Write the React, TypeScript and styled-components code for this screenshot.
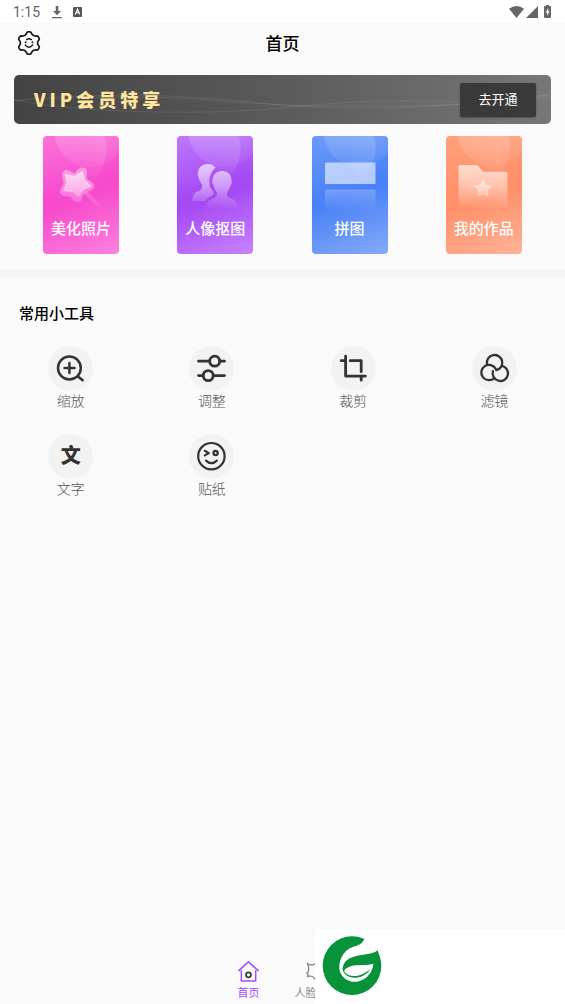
import React from 'react';
import styled, { createGlobalStyle } from 'styled-components';

const GlobalStyle = createGlobalStyle`
  *, *::before, *::after { box-sizing: border-box; }
  body {
    margin: 0;
    background: #fafafa;
    font-family: Roboto, "Noto Sans CJK SC", sans-serif;
  }
  button { font: inherit; border: 0; padding: 0; background: none; cursor: pointer; }
  svg { display: block; }
`;

const Screen = styled.div`
  min-height: 100vh;
  display: flex;
  flex-direction: column;
  background: #fafafa;
`;

const StatusBar = styled.div`
  height: 23px;
  padding: 0 12px 0 13px;
  display: flex;
  align-items: center;
  justify-content: space-between;
  background: #fff;
  color: #666;
`;

const StatusGroup = styled.div<{ $gap: number }>`
  display: flex;
  align-items: center;
  gap: ${(p) => p.$gap}px;
`;

const Clock = styled.span`
  padding-top: 1px;
  font-size: 14px;
  line-height: 22px;
`;

const Header = styled.header`
  height: 40px;
  padding: 0 17px;
  display: grid;
  grid-template-columns: 1fr auto 1fr;
  align-items: center;
`;

const SettingsButton = styled.button`
  width: 24px;
  height: 24px;
`;

const PageTitle = styled.h1`
  margin: 0;
  padding-top: 2px;
  font-size: 17px;
  line-height: 24px;
  font-weight: 500;
  color: #000;
`;

const Main = styled.main`
  flex: 1;
`;

const Banner = styled.section`
  position: relative;
  height: 49px;
  margin: 12px 14px 0;
  padding: 0 15px 0 20px;
  display: flex;
  align-items: center;
  justify-content: space-between;
  border-radius: 5px;
  overflow: hidden;
  background: linear-gradient(90deg, #444344, #5b5b5b 50%, #777);
`;

const BannerLines = styled.svg`
  position: absolute;
  inset: 0;
  width: 100%;
  height: 100%;
`;

const BannerTitle = styled.span`
  position: relative;
  padding-bottom: 2px;
  font-family: "Noto Sans CJK SC", sans-serif;
  font-size: 18px;
  line-height: 24px;
  font-weight: 900;
  letter-spacing: 4px;
  color: #ffe69c;
`;

const OpenButton = styled.button`
  && {
    position: relative;
    width: 76px;
    height: 34px;
    padding-top: 1px;
    border-radius: 2px;
    background: #3a3a3a;
    box-shadow: 0 1px 2px rgba(0, 0, 0, 0.3);
    color: #fff;
    font-size: 13px;
    line-height: 20px;
  }
`;

const Features = styled.section`
  padding: 12px 14px 15px;
  display: grid;
  grid-template-columns: repeat(4, 1fr);
  justify-items: center;
`;

const FeatureCard = styled.button<{ $from: string; $mid: string; $to: string }>`
  && {
    position: relative;
    width: 76px;
    height: 118px;
    padding-top: 71px;
    display: flex;
    justify-content: center;
    border-radius: 4px;
    overflow: hidden;
    background: linear-gradient(
      160deg,
      ${(p) => p.$from},
      ${(p) => p.$mid} 45%,
      ${(p) => p.$mid} 52%,
      ${(p) => p.$to}
    );
  }
`;

const FeatureArt = styled.svg`
  position: absolute;
  inset: 0;
  width: 100%;
  height: 100%;
`;

const FeatureLabel = styled.span`
  position: relative;
  margin-top: 11px;
  font-size: 15px;
  line-height: 22px;
  font-weight: 500;
  color: #fff;
  white-space: nowrap;
`;

const Divider = styled.div`
  height: 9px;
  background: #f5f5f5;
`;

const SectionTitle = styled.h2`
  margin: 0;
  padding: 25px 19px 21px;
  font-size: 15px;
  line-height: 22px;
  font-weight: 500;
  color: #000;
`;

const Tools = styled.div`
  display: grid;
  grid-template-columns: repeat(4, 1fr);
  row-gap: 22px;
  justify-items: center;
`;

const Tool = styled.button`
  display: flex;
  flex-direction: column;
  align-items: center;
`;

const ToolDisc = styled.span`
  width: 45px;
  height: 45px;
  display: grid;
  place-items: center;
  border-radius: 50%;
  background: #f2f2f2;
  color: #333;
`;

const ToolGlyph = styled.span`
  font-size: 20px;
  line-height: 45px;
  font-weight: 900;
`;

const ToolLabel = styled.span`
  font-size: 14px;
  line-height: 21px;
  font-weight: 300;
  color: #555;
`;

const TabBar = styled.nav`
  padding: 10px 0 0;
  display: flex;
  justify-content: center;
  gap: 24px;
`;

const Tab = styled.button<{ $active?: boolean }>`
  && {
    width: 44px;
    display: flex;
    flex-direction: column;
    align-items: center;
    gap: 2px;
    color: ${(p) => (p.$active ? '#a64dff' : '#8a8a8a')};
  }
`;

const TabLabel = styled.span<{ $start?: boolean }>`
  align-self: ${(p) => (p.$start ? 'flex-start' : 'center')};
  font-size: 11px;
  line-height: 20px;
`;

const Watermark = styled.aside`
  position: fixed;
  right: 0;
  bottom: 0;
  width: 250px;
  height: 75px;
  padding: 7px;
  background: #fff;
`;

const gearPath = (() => {
  const at = (deg: number, r: number) => {
    const a = (deg * Math.PI) / 180;
    return `${(12 + r * Math.cos(a)).toFixed(2)} ${(12 + r * Math.sin(a)).toFixed(2)}`;
  };
  let d = `M${at(-100, 11)}`;
  for (let k = 0; k < 6; k += 1) {
    const t = -90 + k * 60;
    d += `Q${at(t, 11.8)} ${at(t + 10, 11)}L${at(t + 16, 9.6)}Q${at(t + 30, 7.9)} ${at(t + 44, 9.6)}L${at(t + 50, 11)}`;
  }
  return `${d}Z`;
})();

const SettingsIcon = () => (
  <svg width="24" height="24" viewBox="0 0 24 24" fill="none" stroke="#1a1a1a" strokeWidth="1.7" strokeLinecap="round" strokeLinejoin="round">
    <path d={gearPath} />
    <path d="M9.600 8.600Q12 6.900 14.400 8.600M8.300 14Q12 18.400 15.700 14" strokeWidth="1.4" />
    <path d="M8.600 11v.5M15.400 11v.5" />
  </svg>
);

const ToolSvg = ({ children }: { children: React.ReactNode }) => (
  <svg width="45" height="45" viewBox="0 0 45 45" fill="none" stroke="currentColor" strokeWidth="2.8" strokeLinecap="round" strokeLinejoin="round">
    {children}
  </svg>
);

const tools = [
  {
    label: '缩放',
    icon: (
      <ToolSvg>
        <circle cx="21.4" cy="22" r="11.4" strokeWidth="2.5" />
        <path d="M16.5 22h10M21.4 17v10" strokeWidth="2.5" />
        <path d="M30 30.6l4.6 3.600" strokeWidth="2.6" />
      </ToolSvg>
    ),
  },
  {
    label: '调整',
    icon: (
      <ToolSvg>
        <path d="M9.5 15.2h11M31 15.2h4.5M9.5 29.6h4.5M24.5 29.6h11" />
        <circle cx="25.7" cy="15.2" r="5" />
        <circle cx="19.2" cy="29.6" r="5" />
      </ToolSvg>
    ),
  },
  {
    label: '裁剪',
    icon: (
      <ToolSvg>
        <path d="M10.2 14.7h4.3M14.6 10.2v19.9h19.8" />
        <path d="M19.2 14.7h11v11M30.2 30.2v4" />
      </ToolSvg>
    ),
  },
  {
    label: '滤镜',
    icon: (
      <ToolSvg>
        <g strokeWidth="2.3">
          <path d="M24.3 24.2A7.7 7.7 0 1 0 15 18.2" />
          <path d="M23.8 22.9A7.7 7.7 0 1 0 22.4 32" />
          <path d="M20.9 25.2A7.7 7.7 0 1 0 30.1 19.8" />
        </g>
      </ToolSvg>
    ),
  },
  { label: '文字', icon: <ToolGlyph>文</ToolGlyph> },
  {
    label: '贴纸',
    icon: (
      <ToolSvg>
        <g strokeWidth="2.2">
          <circle cx="22.4" cy="22.2" r="13.2" />
          <path d="M15.8 16.8l4 2.3-4 2.3" />
          <circle cx="26.6" cy="19" r="2.1" />
          <path d="M17 26.6Q22.4 31.8 27.8 26.6" />
        </g>
      </ToolSvg>
    ),
  },
];

const starPath =
  'M33 36Q36 31 40 31.500Q44.500 32 44 37L43.800 41Q44 43 46 44L49 46Q53 48.500 50 53Q48 55 44 56Q41 57 40 60Q38.500 66 35 66Q31 66 29.500 63Q27.500 60.500 25 60.300L21 60Q16.500 59 17 54.500Q18 51 20 49Q21 47 20 44L19 39.500Q19 34 24 34Q27 35 29.500 36.500Q31.500 37.500 33 36z';

const features = [
  {
    label: '美化照片',
    from: '#fb73d9',
    mid: '#f74acd',
    to: '#fd82dd',
    art: (
      <>
        <path d="M43.500 57.500l14 14" stroke="url(#fade)" strokeWidth="4" strokeLinecap="round" />
        <path d={starPath} fill="url(#soft)" />
        <path d="M39.500 35.500L41.500 44 48 50 40 53.500 35.500 60 29.500 55.500 20.500 54.500 24 47 22.500 38.500 31.500 40.500z" fill="url(#shine)" stroke="url(#soft)" strokeWidth="1.500" strokeLinejoin="round" />
      </>
    ),
  },
  {
    label: '人像抠图',
    from: '#bd79fb',
    mid: '#a64af4',
    to: '#c783ff',
    art: (
      <>
        <path d="M38.500 31.500C36.500 28.500 33 27.700 30 28c-6 .5-9 4.500-9 9-.8 1-.3 3.500.7 4.500.5 4 3.300 5.500 3.500 8 .3 4-2.200 5-5.700 6.500-3 1.500-4 4-4 9h13c2-3.500 6-4.500 7.500-6 1.500-1.500.5-3-.5-5-3-2-3-5-3-7.500-.5-5 1.500-10.500 6-15z" fill="url(#shine)" />
        <path d="M45 35c-6 0-9.500 4-9.500 9.500-.8 1 0 4 1 5 .7 4 3 5 3.500 8 .3 4-3 4.700-6 6-3.500 1.500-4.500 4-4.500 9h31c0-5-1-7.500-4.500-9-3-1.300-6.300-2-6-6 .5-3 2.800-4 3.500-8 1-1 1.800-4 1-5C54.500 39 51 35 45 35z" fill="url(#shine)" />
      </>
    ),
  },
  {
    label: '拼图',
    from: '#6d9af8',
    mid: '#4a82f7',
    to: '#86aaf8',
    art: (
      <>
        <rect x="13" y="26.500" width="50.500" height="21.500" rx="1" fill="#fff" opacity=".58" />
        <rect x="13" y="53.500" width="50.500" height="21" rx="1" fill="url(#fade)" />
      </>
    ),
  },
  {
    label: '我的作品',
    from: '#ffa17d',
    mid: '#ff9069',
    to: '#ffb297',
    art: (
      <>
        <path d="M12.500 31a2 2 0 0 1 2-2h15q2 0 3.500 2l4.500 4.700H59.500a2 2 0 0 1 2 2V72h-49z" fill="url(#shine)" />
        <path d="M37 44l2.600 5.400 6 .8-4.400 4.100 1.100 6-5.300-2.800-5.300 2.800 1.100-6-4.400-4.100 6-.8z" fill="url(#shine)" stroke="url(#shine)" strokeLinejoin="round" />
      </>
    ),
  },
];

const ArtDefs = () => (
  <svg width="0" height="0" style={{ position: 'absolute' }} aria-hidden="true">
    <defs>
      <linearGradient id="shine" gradientUnits="userSpaceOnUse" x1="0" y1="27" x2="0" y2="73">
        <stop offset="0" stopColor="#fff" stopOpacity=".68" />
        <stop offset=".5" stopColor="#fff" stopOpacity=".45" />
        <stop offset="1" stopColor="#fff" stopOpacity="0" />
      </linearGradient>
      <linearGradient id="soft" gradientUnits="userSpaceOnUse" x1="0" y1="30" x2="0" y2="70">
        <stop offset="0" stopColor="#fff" stopOpacity=".42" />
        <stop offset="1" stopColor="#fff" stopOpacity=".22" />
      </linearGradient>
      <linearGradient id="fade" gradientUnits="userSpaceOnUse" x1="0" y1="30" x2="0" y2="75">
        <stop offset="0" stopColor="#fff" stopOpacity=".5" />
        <stop offset="1" stopColor="#fff" stopOpacity="0" />
      </linearGradient>
      <linearGradient id="halo" gradientUnits="userSpaceOnUse" x1="0" y1="0" x2="0" y2="32">
        <stop offset="0" stopColor="#fff" stopOpacity=".12" />
        <stop offset="1" stopColor="#fff" stopOpacity=".04" />
      </linearGradient>
      <linearGradient id="arc" gradientUnits="userSpaceOnUse" x1="60" y1="8" x2="32" y2="42">
        <stop offset="0" stopColor="#fff" stopOpacity=".14" />
        <stop offset="1" stopColor="#fff" stopOpacity="0" />
      </linearGradient>
    </defs>
  </svg>
);

const HomeIcon = () => (
  <svg width="21" height="21" viewBox="0 0 21 21" fill="none" stroke="currentColor" strokeWidth="1.500" strokeLinecap="round" strokeLinejoin="round">
    <path d="M.8 9.600L10.500.9l9.700 8.700M3.300 9.800v10.300h14.400V9.800" />
    <circle cx="10.500" cy="13.800" r="2.500" stroke="#3d3d3d" strokeWidth="1.800" />
  </svg>
);

const FaceIcon = () => (
  <svg width="21" height="21" viewBox="0 0 21 21" fill="none" stroke="currentColor" strokeWidth="1.300" strokeLinejoin="round">
    <path d="M1.200 2.300Q4.500 5 8 3.400l2.500-2 2.500 2Q16.500 5 19.800 2.300 17.500 7 20.200 12.500 18 13 18.600 15.300 14 14.500 13 17l-2.500 3L8 17Q6.500 14.500 1.500 15.500 3 13 .8 12.500 4.500 8.500 1.200 2.300z" />
  </svg>
);

const LeafLogo = () => (
  <svg width="60" height="60" viewBox="0 0 180 180" role="img" aria-label="logo">
    <circle cx="90" cy="89" r="88" fill="#08923a" />
    <path d="M128 0L127 9Q121 24 104 29C70 35 50 66 52 98C56 128 84 140 104 137C130 133 150 115 154 84L167 43 180 30V0z" fill="#fff" />
    <path d="M167 43C150 56 125 55 100 61C75 67 60 83 62 103C70 129 118 138 146 99L154 84 172 64z" fill="#08923a" />
    <path d="M154 83C130 92 95 80 71 98C66 102 66 106 70 111C88 128 122 120 146 98L142 108Q152 98 154 83z" fill="#fff" />
  </svg>
);

export default function App() {
  return (
    <>
      <GlobalStyle />
      <ArtDefs />
      <Screen>
        <StatusBar>
          <StatusGroup $gap={12}>
            <Clock>1:15</Clock>
            <StatusGroup $gap={11}>
              <svg width="10" height="14" viewBox="0 0 10 14" fill="currentColor">
                <path d="M3.700 1h2.600v5h2.700L5 10.300 1 6h2.700zM0 12h10v1.300H0z" />
              </svg>
              <svg width="9" height="10" viewBox="0 0 9 10">
                <rect width="9" height="10" rx="1" fill="#555" />
                <path d="M2.200 7.500l2.300-5.500 2.300 5.500M3.200 5.700h2.600" fill="none" stroke="#fff" strokeWidth="1.200" />
              </svg>
            </StatusGroup>
          </StatusGroup>
          <StatusGroup $gap={2}>
            <svg width="15" height="12" viewBox="0 0 15 12" fill="currentColor">
              <path d="M0 2.800Q7.500-2.600 15 2.800L7.500 12z" />
            </svg>
            <svg width="12" height="12" viewBox="0 0 12 12" fill="currentColor">
              <path d="M12 0v12H0z" />
            </svg>
            <svg width="13" height="13" viewBox="1 0 13 13" fill="currentColor">
              <path d="M7 1V0h3v1h1q1 0 1 1v10q0 1-1 1H6q-1 0-1-1V2q0-1 1-1z" />
              <path d="M9.300 3L6.700 7.500h1.500V11l2.300-4.700H9.300z" fill="#fff" />
            </svg>
          </StatusGroup>
        </StatusBar>

        <Header>
          <SettingsButton aria-label="设置">
            <SettingsIcon />
          </SettingsButton>
          <PageTitle>首页</PageTitle>
        </Header>

        <Main>
          <Banner>
            <BannerLines viewBox="0 0 537 49" preserveAspectRatio="none" fill="none" stroke="#fff" strokeOpacity=".09">
              <path d="M0 25C60 20 120 18 190 23S270 33 350 33S470 27 537 20" />
              <path d="M0 25C50 34 110 38 190 37S300 27 370 26S480 30 537 22" />
              <path d="M0 26C60 22 130 20 195 25S280 31 340 31S450 32 537 19" />
            </BannerLines>
            <BannerTitle>VIP会员特享</BannerTitle>
            <OpenButton>去开通</OpenButton>
          </Banner>

          <Features>
            {features.map((f) => (
              <FeatureCard key={f.label} $from={f.from} $mid={f.mid} $to={f.to}>
                <FeatureArt viewBox="0 0 76 118" fill="none">
                  <circle cx="47" cy="-5" r="36" fill="url(#halo)" />
                  <path d="M12.700 0V4A36 36 0 0 0 36 29L51 44Q68 22 62 0z" fill="url(#arc)" />
                  {f.art}
                </FeatureArt>
                <FeatureLabel>{f.label}</FeatureLabel>
              </FeatureCard>
            ))}
          </Features>

          <Divider />

          <SectionTitle>常用小工具</SectionTitle>
          <Tools>
            {tools.map((t) => (
              <Tool key={t.label}>
                <ToolDisc>{t.icon}</ToolDisc>
                <ToolLabel>{t.label}</ToolLabel>
              </Tool>
            ))}
          </Tools>
        </Main>

        <TabBar>
          <Tab $active>
            <HomeIcon />
            <TabLabel>首页</TabLabel>
          </Tab>
          <Tab>
            <FaceIcon />
            <TabLabel $start>人脸</TabLabel>
          </Tab>
        </TabBar>
      </Screen>
      <Watermark>
        <LeafLogo />
      </Watermark>
    </>
  );
}
